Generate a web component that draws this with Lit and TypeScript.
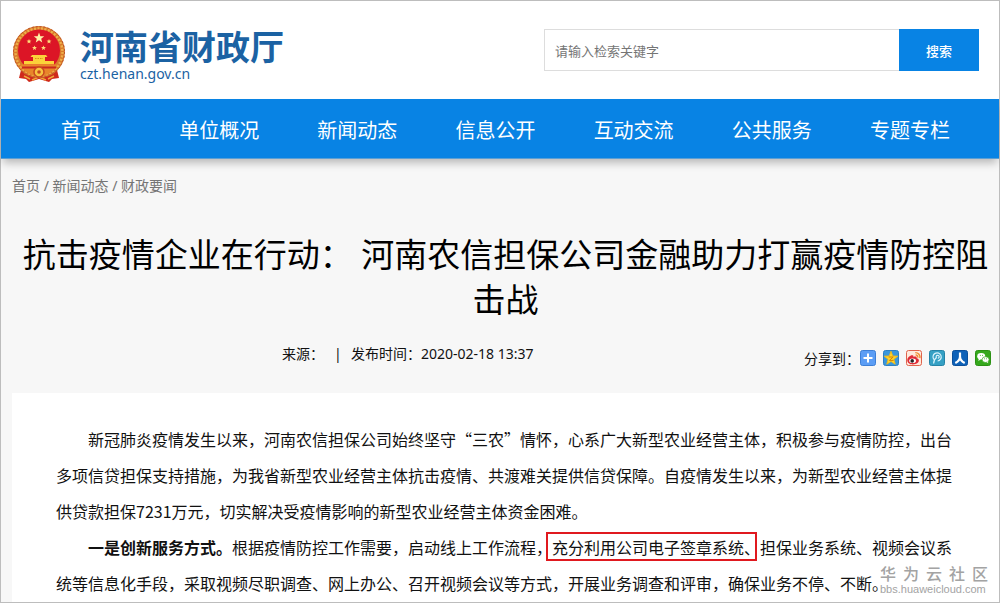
import { LitElement, html, svg, css } from "lit";
import { customElement } from "lit/decorators.js";

const NAV = ["首页", "单位概况", "新闻动态", "信息公开", "互动交流", "公共服务", "专题专栏"];

const STAR = (cx: number, cy: number, r: number) => {
  const pts: string[] = [];
  for (let i = 0; i < 10; i++) {
    const a = (Math.PI / 5) * i - Math.PI / 2;
    const q = i % 2 ? r * 0.42 : r;
    pts.push(`${(cx + q * Math.cos(a)).toFixed(2)},${(cy + q * Math.sin(a)).toFixed(2)}`);
  }
  return pts.join(" ");
};

const SHARES = [
  {
    name: "更多",
    art: svg`<rect x=".5" y=".5" width="15" height="15" rx="2" fill="#5b9df5" stroke="#3d7fd6"/>
      <path d="M8 3.5v9M3.5 8h9" stroke="#fff" stroke-width="2"/>`,
  },
  {
    name: "QQ空间",
    art: svg`<rect x=".5" y=".5" width="15" height="15" rx="2" fill="#3a97dc" stroke="#2c7fc4"/>
      <polygon points=${STAR(8, 8.4, 7.2)} fill="#ffd42a" stroke="#f7b910" stroke-width=".8"/>
      <path d="M5.6 7h4.6L6.4 10.4h4.2" fill="none" stroke="#d98200" stroke-width="1"/>`,
  },
  {
    name: "新浪微博",
    art: svg`<rect x=".5" y=".5" width="15" height="15" rx="2" fill="#ffe9dc" stroke="#e0634c"/>
      <path d="M1.3 10.2c0-2.700 3.200-5.300 5.300-4.900 1 .2 1 1.100.8 1.700 1.700-.7 3.600-.6 3.300 1.200 1.300.3 2.200 1.100 2.200 2.300 0 2.200-2.800 3.900-6 3.900s-5.600-1.700-5.600-4.200z" fill="#df2b36"/>
      <ellipse cx="6.600" cy="10.800" rx="3.400" ry="2.300" fill="#fff"/>
      <circle cx="6.200" cy="10.900" r="1.800" fill="#222"/>
      <path d="M9.300 2.600a4.600 4.600 0 0 1 4.600 5.500M9.600 4.900a2.300 2.300 0 0 1 2.200 2.700" fill="none" stroke="#f08a2d" stroke-width="1.400"/>`,
  },
  {
    name: "腾讯微博",
    art: svg`<rect x=".5" y=".5" width="15" height="15" rx="2" fill="#35a0c4" stroke="#2583a6"/>
      <path d="M4.600 13.500c.1-2.700 1-4.800 3.200-6.300M5 9.600A4.100 4.100 0 1 1 8.600 11M7.400 7.600a1.500 1.500 0 1 1 1.400.7" fill="none" stroke="#d8f2fb" stroke-width="1.200"/>`,
  },
  {
    name: "人人网",
    art: svg`<rect x=".5" y=".5" width="15" height="15" rx="2" fill="#0f62b8" stroke="#0b4f9a"/>
      <path d="M8 2.500v4c0 3-1.700 5-4.700 6.500M8 6.500c0 3 1.700 5 4.700 6.500" fill="none" stroke="#fff" stroke-width="2.200"/>`,
  },
  {
    name: "微信",
    art: svg`<rect x=".5" y=".5" width="15" height="15" rx="2" fill="#35a81c" stroke="#2b9114"/>
      <ellipse cx="6.200" cy="6.300" rx="4" ry="3.300" fill="#fff"/>
      <path d="M3.800 8.500 3.300 11l2.400-1.500z" fill="#fff"/>
      <ellipse cx="10.600" cy="9.600" rx="3.500" ry="2.900" fill="#fff" stroke="#35a81c" stroke-width=".7"/>
      <path d="m11.500 12 1.700 1.200-.3-2z" fill="#fff"/>
      <path d="M4.900 5.400h.9M7 5.400h.9M9.200 8.800h.8M11.200 8.800h.8" stroke="#35a81c" stroke-width=".9"/>`,
  },
];

@customElement("app-root")
export class AppRoot extends LitElement {
  static styles = css`
    :host {
      display: block;
      font-family: "Noto Sans", "Noto Sans CJK SC", sans-serif;
      font-size: 14px;
      color: #111;
    }
    * { box-sizing: border-box; }
    a { color: inherit; text-decoration: none; }
    .frame {
      position: relative;
      display: flex;
      flex-direction: column;
      min-height: 100vh;
      border: 1px solid #bdbdbd;
      background: #f7f7f7;
    }
    .header {
      display: flex;
      align-items: center;
      justify-content: space-between;
      height: 98px;
      padding: 0 20px 0 11px;
      background: #fff;
    }
    .brand { display: flex; align-items: center; gap: 14px; padding-top: 8px; color: #1b62a3; }
    .emblem { display: block; width: 54px; height: 60px; }
    .brand-text { display: flex; flex-direction: column; }
    .brand-name { font: 700 34px/40px "Noto Sans CJK SC", sans-serif; }
    .brand-url { font-size: 14px; line-height: 16px; }
    .search { display: flex; width: 435px; height: 42px; }
    .search-input {
      flex: 1;
      min-width: 0;
      padding: 0 10px;
      border: 1px solid #ddd;
      border-right: 0;
      border-radius: 0;
      background: #fff;
      font: 13px "Noto Sans CJK SC", sans-serif;
      outline: none;
    }
    .search-input::placeholder { color: #757575; opacity: 1; }
    .search-button {
      width: 80px;
      padding: 0;
      border: 0;
      background: #0883e4;
      color: #fff;
      font: 500 13px "Noto Sans CJK SC", sans-serif;
    }
    .nav {
      display: flex;
      height: 60px;
      padding: 2px 20px 0 11px;
      background: #0883e4;
      border-bottom: 1px solid #5c9fd4;
      box-shadow: 0 6px 8px -2px rgba(0, 0, 0, 0.25);
    }
    .nav-link {
      flex: 1;
      text-align: center;
      color: #fff;
      font-size: 20px;
      line-height: 60px;
    }
    .crumbs { padding: 16px 11px 0; color: #757575; line-height: 22px; }
    .title {
      margin: 0;
      padding: 35px 0 0 11px;
      text-align: center;
      font-weight: 400;
      font-size: 33px;
      line-height: 45px;
      color: #000;
    }
    .meta {
      display: grid;
      grid-template-columns: 1fr auto;
      height: 71px;
      padding: 21px 8px 0 281px;
    }
    .facts { display: flex; line-height: 22px; }
    .source { width: 52px; }
    .divider { width: 17px; }
    .share { display: flex; align-items: center; height: 30px; }
    .share-links { display: flex; gap: 7px; }
    .share-link { display: block; width: 16px; height: 16px; }
    .share-icon { display: block; width: 16px; height: 16px; }
    .article {
      flex: 1;
      margin-left: 11px;
      padding: 28px 41px 0 44px;
      background: #fff;
      font: 16px/36px "Noto Sans CJK SC", sans-serif;
    }
    .para { margin: 0; text-indent: 2em; }
    .lead { font-weight: 700; }
    .marked { position: relative; text-indent: 0; }
    .marked::before {
      content: "";
      position: absolute;
      inset: -3px 3px -2px -6px;
      border: 2px solid #e0191f;
    }
    .watermark {
      position: absolute;
      right: 11px;
      bottom: 7px;
      width: 108px;
      color: #a3a3a3;
    }
    .mark-name {
      display: flex;
      justify-content: space-between;
      font: 500 16px/20px "Noto Sans CJK SC", sans-serif;
    }
    .mark-url { font: 11px/12px "Liberation Sans", sans-serif; }
  `;

  render() {
    return html`
      <div class="frame" lang="zh-CN">
        <header class="header">
          <a class="brand" href="#">
            ${this.emblem()}
            <span class="brand-text">
              <span class="brand-name">河南省财政厅</span>
              <span class="brand-url">czt.henan.gov.cn</span>
            </span>
          </a>
          <form class="search" @submit=${(e: Event) => e.preventDefault()}>
            <input class="search-input" type="text" aria-label="检索关键字" placeholder="请输入检索关键字" />
            <button class="search-button" type="submit">搜索</button>
          </form>
        </header>
        <nav class="nav">${NAV.map((n) => html`<a class="nav-link" href="#">${n}</a>`)}</nav>
        <div class="crumbs"><a href="#">首页</a> / <a href="#">新闻动态</a> / <a href="#">财政要闻</a></div>
        <h1 class="title">抗击疫情企业在行动： 河南农信担保公司金融助力打赢疫情防控阻击战</h1>
        <div class="meta">
          <div class="facts">
            <span class="source">来源：</span><span class="divider">|</span><span>发布时间：2020-02-18 13:37</span>
          </div>
          <div class="share">
            <span>分享到：</span>
            <div class="share-links">
              ${SHARES.map(
                (s) => html`<a class="share-link" href="#" aria-label=${s.name}
                  ><svg class="share-icon" viewBox="0 0 16 16">${s.art}</svg></a
                >`
              )}
            </div>
          </div>
        </div>
        <article class="article">
          <p class="para">新冠肺炎疫情发生以来，河南农信担保公司始终坚守“三农”情怀，心系广大新型农业经营主体，积极参与疫情防控，出台多项信贷担保支持措施，为我省新型农业经营主体抗击疫情、共渡难关提供信贷保障。自疫情发生以来，为新型农业经营主体提供贷款担保7231万元，切实解决受疫情影响的新型农业经营主体资金困难。</p>
          <p class="para"><strong class="lead">一是创新服务方式。</strong>根据疫情防控工作需要，启动线上工作流程，<span class="marked">充分利用公司电子签章系统、</span>担保业务系统、视频会议系统等信息化手段，采取视频尽职调查、网上办公、召开视频会议等方式，开展业务调查和评审，确保业务不停、不断。</p>
        </article>
        <div class="watermark">
          <div class="mark-name">${[..."华为云社区"].map((c) => html`<span>${c}</span>`)}</div>
          <div class="mark-url">bbs.huaweicloud.com</div>
        </div>
      </div>
    `;
  }

  private emblem() {
    return html`<svg class="emblem" viewBox="0 0 54 60" aria-hidden="true">
      <path d="M9 46 7 54l7 1 3 3 10-3 10 3 3-3 7-1-2-8z" fill="#cf2a1c" />
      <path d="M12 52l6 3M42 52l-6 3M20 56l7-3 7 3" stroke="#f0a63a" stroke-width="1.500" fill="none" />
      <circle cx="27" cy="28" r="26" fill="#d9782b" />
      <circle cx="27" cy="28" r="23.500" fill="none" stroke="#edb04a" stroke-width="2.500" stroke-dasharray="2 1.500" />
      <circle cx="27" cy="28" r="25.500" fill="none" stroke="#b9502a" stroke-width="1" stroke-dasharray="2 2" />
      <circle cx="27" cy="26.500" r="21" fill="#dc1526" />
      <polygon points=${STAR(27, 14, 5.5)} fill="#fff3a8" />
      <polygon points=${STAR(17, 17.5, 2.6)} fill="#ffe07a" />
      <polygon points=${STAR(37, 17.5, 2.6)} fill="#ffe07a" />
      <polygon points=${STAR(22.5, 24, 2.6)} fill="#ffe07a" />
      <polygon points=${STAR(31.5, 24, 2.6)} fill="#ffe07a" />
      <path d="M20 31h14l1.500 2h-17zM21 33h12v4H21zM12 37h30v3.500H12z" fill="#fbd23a" />
      <path d="M23 34.500h8" stroke="#d98a1c" stroke-width="1" stroke-dasharray="1.500 1" />
      <path d="M8 40.500h38C42 48 35 52 27 52S12 48 8 40.500z" fill="#e8862a" />
      <path d="M10 43.500h34" stroke="#c9281f" stroke-width="2" />
      <circle cx="27" cy="48" r="5" fill="#f7c440" stroke="#c8481f" stroke-width="1.500" />
      <circle cx="27" cy="48" r="1.800" fill="#c8481f" />
    </svg>`;
  }
}
